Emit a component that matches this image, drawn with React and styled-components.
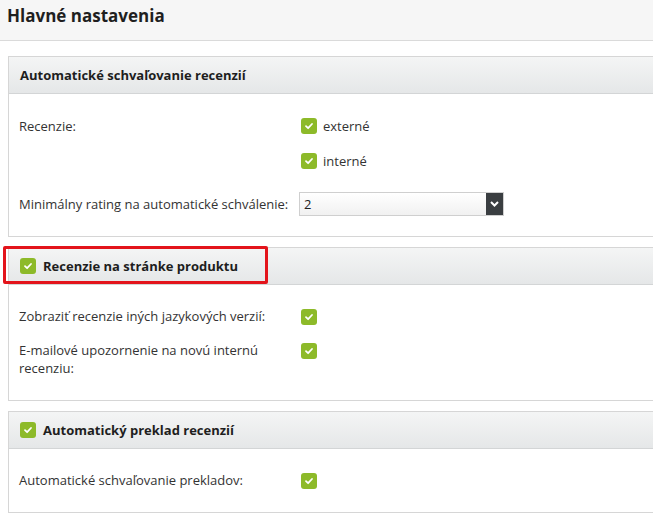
import styled, { createGlobalStyle } from 'styled-components'

const GlobalStyle = createGlobalStyle`
  html, body {
    margin: 0;
    padding: 0;
    background: #fff;
  }
  body {
    font-family: "Open Sans", "Liberation Sans", sans-serif;
    font-size: 13px;
    color: #333;
  }
`;

const Check = ({ size = 16 }) => (
    <Box size={size}>
        <svg width="10" height="10" viewBox="0 0 10 10">
            <path d="M2 5.2 L4.1 7.2 L8 3" fill="none" stroke="#fff" strokeWidth="1.8" strokeLinecap="round" strokeLinejoin="round" />
        </svg>
    </Box>
);

const Chevron = () => (
    <svg width="9" height="6" viewBox="0 0 9 6">
        <path d="M1 1 L4.5 4.5 L8 1" fill="none" stroke="#fff" strokeWidth="2" />
    </svg>
);

const App = () => {
    return (
        <Page>
            <GlobalStyle />
            <TitleBar>
                <Title>Hlavné nastavenia</Title>
            </TitleBar>
            <Content>
                <Panel>
                    <PanelHead>
                        <HeadText>Automatické schvaľovanie recenzií</HeadText>
                    </PanelHead>
                    <PanelBody top={15}>
                        <Row>
                            <Label>Recenzie:</Label>
                            <Options>
                                <Option><Check /><span>externé</span></Option>
                                <Option><Check /><span>interné</span></Option>
                            </Options>
                        </Row>
                        <SelectRow>
                            <Label>Minimálny rating na automatické schválenie:</Label>
                            <Select>
                                <SelectValue>2</SelectValue>
                                <SelectButton><Chevron /></SelectButton>
                            </Select>
                        </SelectRow>
                    </PanelBody>
                </Panel>

                <Panel>
                    <PanelHead>
                        <Check />
                        <HeadText>Recenzie na stránke produktu</HeadText>
                        <Highlight />
                    </PanelHead>
                    <PanelBody>
                        <Row>
                            <Label>Zobraziť recenzie iných jazykových verzií:</Label>
                            <Control><Check /></Control>
                        </Row>
                        <Row>
                            <Label>E-mailové upozornenie na novú internú<br />recenziu:</Label>
                            <Control><Check /></Control>
                        </Row>
                    </PanelBody>
                </Panel>

                <Panel>
                    <PanelHead>
                        <Check />
                        <HeadText>Automatický preklad recenzií</HeadText>
                    </PanelHead>
                    <PanelBody>
                        <Row>
                            <Label>Automatické schvaľovanie prekladov:</Label>
                            <Control><Check /></Control>
                        </Row>
                    </PanelBody>
                </Panel>
            </Content>
        </Page>
    );
}

export default App;

const Page = styled.div`
width: 100%;
overflow: hidden;
`;
const TitleBar = styled.div`
height: 41px;
box-sizing: border-box;
padding: 5px 7px 0;
background: #f6f6f6;
border-bottom: 1px solid #dadada;
`;
const Title = styled.div`
font-size: 17px;
font-weight: 700;
line-height: 22px;
color: #1f1f1f;
`;
const Content = styled.div`
padding: 15px 0 0 8px;
display: flex;
flex-direction: column;
gap: 10px;
`;
const Panel = styled.div`
width: 720px;
border: 1px solid #d6d6d6;
background: #fff;
`;
const PanelHead = styled.div`
position: relative;
height: 36px;
display: flex;
align-items: center;
gap: 7px;
padding: 0 11px;
background: linear-gradient(#f4f5f5, #e5e7e8);
border-bottom: 1px solid #d3d5d6;
`;
const HeadText = styled.div`
font-weight: 700;
font-size: 13px;
color: #1e1e1e;
`;
const Highlight = styled.div`
position: absolute;
left: -6px;
top: -2px;
width: 259px;
height: 32px;
border: 3px solid #e3141b;
border-radius: 2px;
pointer-events: none;
`;
const PanelBody = styled.div`
padding: ${p => p.top || 14}px 10px 15px;
`;
const Row = styled.div`
display: flex;
align-items: flex-start;
padding: 8px 0;
line-height: 18px;
`;
const SelectRow = styled.div`
display: flex;
align-items: center;
padding: 14px 0 5px;
`;
const Label = styled.div`
width: 280px;
flex: none;
line-height: 18px;
`;
const Control = styled.div`
display: flex;
margin-left: 2px;
padding-top: 2px;
`;
const Options = styled.div`
display: flex;
flex-direction: column;
gap: 17px;
margin-left: 2px;
`;
const Option = styled.div`
display: flex;
align-items: center;
gap: 6px;
height: 18px;
`;
const Box = styled.span`
display: inline-flex;
align-items: center;
justify-content: center;
flex: none;
width: ${p => p.size}px;
height: ${p => p.size}px;
border-radius: 3px;
background: #8dba29;
`;
const Select = styled.div`
display: flex;
width: 205px;
height: 24px;
box-sizing: border-box;
border: 1px solid #cfcfcf;
background: linear-gradient(#fff, #f1f1f1);
`;
const SelectValue = styled.div`
flex: 1;
padding-left: 4px;
line-height: 22px;
font-size: 13px;
color: #222;
`;
const SelectButton = styled.div`
width: 17px;
display: flex;
align-items: center;
justify-content: center;
background: #3a3e41;
`;
